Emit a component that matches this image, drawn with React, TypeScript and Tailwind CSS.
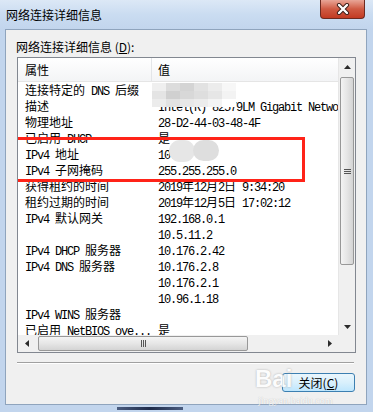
import React from "react";

const rows: [string, string][] = [
  ["连接特定的 DNS 后缀", ""],
  ["描述", "Intel(R) 82579LM Gigabit Network Connection"],
  ["物理地址", "28-D2-44-03-48-4F"],
  ["已启用 DHCP", "是"],
  ["IPv4 地址", "10.    1"],
  ["IPv4 子网掩码", "255.255.255.0"],
  ["获得租约的时间", "2019年12月2日 9:34:20"],
  ["租约过期的时间", "2019年12月5日 17:02:12"],
  ["IPv4 默认网关", "192.168.0.1"],
  ["", "10.5.11.2"],
  ["IPv4 DHCP 服务器", "10.176.2.42"],
  ["IPv4 DNS 服务器", "10.176.2.8"],
  ["", "10.176.2.1"],
  ["", "10.96.1.18"],
  ["IPv4 WINS 服务器", ""],
  ["已启用 NetBIOS ove...", "是"],
];

// SimSun style: ascii is half width (6px), cjk 12px
function T({ s }: { s: string }) {
  const parts = s.split(/([\x00-\x7f]+)/).filter(Boolean);
  return (
    <>
      {parts.map((p, i) =>
        /^[\x00-\x7f]+$/.test(p) ? (
          <span key={i} className="font-['Liberation_Mono'] text-[12px] tracking-[-1.2px] whitespace-pre">
            {p}
          </span>
        ) : (
          <span key={i}>{p}</span>
        )
      )}
    </>
  );
}

function CloseX() {
  return (
    <svg width="14" height="12" viewBox="0 0 14 12">
      <path d="M3 2 L11 10 M11 2 L3 10" stroke="#3a1c18" strokeWidth="4.2" strokeLinecap="round" />
      <path d="M3 2 L11 10 M11 2 L3 10" stroke="#ffffff" strokeWidth="2.4" strokeLinecap="round" />
    </svg>
  );
}

export default function App() {
  return (
    <div className="relative w-[373px] h-[412px] overflow-hidden bg-[#c2d5ed] flex flex-col font-['Noto_Sans_CJK_SC',sans-serif] text-[12px] text-black">
      {/* title bar */}
      <div className="h-[29px] flex justify-between bg-gradient-to-b from-[#dce8f6] via-[#cadcf1] to-[#c2d5ed]">
        <div className="pl-[6px] pt-[6px] leading-[18px] text-[12px]">网络连接详细信息</div>
        <div className="mr-[8px] w-[45px] h-[19px] rounded-b-[4px] border border-t-0 border-[#6d2a20] bg-gradient-to-b from-[#e8a597] via-[#cf5a43] to-[#c23a22] flex items-center justify-center">
          <CloseX />
        </div>
      </div>

      {/* dialog panel */}
      <div className="ml-[5px] mr-[6px] mb-[7px] flex-1 border border-[#8fa4bd] bg-[#f0f0f0] flex flex-col">
        <div className="pl-[10px] pt-[10px] leading-[14px]">
          网络连接详细信息 (<span className="underline">D</span>):
        </div>

        {/* list box */}
        <div className="ml-[11px] mt-[3px] w-[339px] h-[296px] border border-[#828790] bg-white grid grid-cols-[1fr_17px] grid-rows-[1fr_17px]">
          <div className="relative overflow-hidden">
            <div className="h-[24px] flex border-b border-[#e5e5e5] bg-gradient-to-b from-white to-[#f3f4f6]">
              <div className="w-[134px] pl-[7px] flex items-center border-r border-[#e3e5e8]">属性</div>
              <div className="pl-[6px] flex items-center">值</div>
            </div>
            <div>
              {rows.map(([k, v], i) => (
                <div key={i} className="h-[16px] flex leading-[16px] whitespace-nowrap">
                  <div className="w-[134px] pl-[7px] shrink-0">
                    <T s={k} />
                  </div>
                  <div className="pl-[6px]">
                    <T s={v} />
                  </div>
                </div>
              ))}
            </div>
            {/* mosaic over the dns suffix */}
            <div className="absolute left-[134px] top-[25px] grid grid-cols-[repeat(6,14px)] grid-rows-[repeat(3,8px)]">
              {[
                "#efefef", "#dcdcdc", "#d4d4d4", "#e2e2e2", "#ececec", "#f7f7f7",
                "#e4e4e4", "#d0d0d0", "#d8d8d8", "#dedede", "#e6e6e6", "#f3f3f3",
                "#ececec", "#e2e2e2", "#e8e8e8", "#ececec", "#f4f4f4", "#ffffff",
              ].map((c, i) => (
                <div key={i} style={{ backgroundColor: c }} />
              ))}
            </div>
            {/* blobs over the ip */}
            <div className="absolute left-[151px] top-[82px] w-[26px] h-[22px] rounded-full bg-[#e6e6e6]" />
            <div className="absolute left-[175px] top-[82px] w-[26px] h-[21px] rounded-full bg-[#dedede]" />

            {/* red highlight */}
            <div className="absolute left-[-3px] top-[79px] w-[290px] h-[45px] border-[3px] border-[#ff2318]" />
          </div>

          {/* vertical scrollbar */}
          <div className="bg-[#f0f0f0] border-l border-[#e6e6e6] flex flex-col">
            <div className="h-[17px] flex items-center justify-center">
              <svg width="7" height="4" viewBox="0 0 7 4"><path d="M0 4 L3.5 0 L7 4 Z" fill="#2b2b2b" /></svg>
            </div>
            <div className="mx-[1px] mt-[2px] h-[188px] rounded-[2px] border border-[#989898] bg-gradient-to-r from-[#f4f4f4] via-[#e6e6e6] to-[#d4d4d4] flex items-center justify-center">
              <div className="flex flex-col gap-[1px]">
                <div className="w-[7px] h-[1px] bg-[#555]" />
                <div className="w-[7px] h-[1px] bg-[#555]" />
                <div className="w-[7px] h-[1px] bg-[#555]" />
              </div>
            </div>
            <div className="flex-1" />
            <div className="h-[17px] flex items-center justify-center">
              <svg width="7" height="4" viewBox="0 0 7 4"><path d="M0 0 L3.5 4 L7 0 Z" fill="#2b2b2b" /></svg>
            </div>
          </div>

          {/* horizontal scrollbar */}
          <div className="bg-[#f0f0f0] flex items-center">
            <div className="w-[17px] flex justify-center">
              <svg width="4" height="7" viewBox="0 0 4 7"><path d="M4 0 L0 3.5 L4 7 Z" fill="#2b2b2b" /></svg>
            </div>
            <div className="ml-[3px] w-[210px] h-[15px] rounded-[2px] border border-[#989898] bg-gradient-to-b from-[#f4f4f4] via-[#e6e6e6] to-[#d4d4d4] flex items-center justify-center">
              <div className="flex gap-[1px]">
                <div className="w-[1px] h-[7px] bg-[#555]" />
                <div className="w-[1px] h-[7px] bg-[#555]" />
                <div className="w-[1px] h-[7px] bg-[#555]" />
              </div>
            </div>
            <div className="flex-1" />
            <div className="w-[17px] flex justify-center">
              <svg width="4" height="7" viewBox="0 0 4 7"><path d="M0 0 L4 3.5 L0 7 Z" fill="#2b2b2b" /></svg>
            </div>
          </div>
          <div className="bg-[#f0f0f0]" />
        </div>

        {/* separator */}
        <div className="ml-[11px] mt-[9px] w-[337px] h-[2px] border-t border-[#a0a0a0] border-b border-b-white" />

        {/* button */}
        <div className="self-end mr-[11px] mt-[9px] w-[73px] h-[19px] rounded-[3px] border border-[#3c7fb1] bg-gradient-to-b from-[#eaf6fd] via-[#d9f0fc] to-[#bee6fd] flex items-center justify-center leading-none">
          关闭(<span className="underline">C</span>)
        </div>
      </div>

      {/* watermark */}
      <div className="absolute left-[255px] top-[367px] text-[24px] font-bold font-['Liberation_Sans'] text-white opacity-80 [text-shadow:0_0_2px_#9a9a9a] leading-none">
        Bai
      </div>
      <div className="absolute left-[258px] top-[396px] text-[10px] font-['Liberation_Serif'] text-white opacity-80 [text-shadow:0_0_1px_#a0a0a0] leading-none">
        jingyan.baidu.com
      </div>

      {/* task bar strip */}
      <div className="absolute left-[117px] bottom-[2px] w-[66px] h-[3px] bg-gradient-to-r from-[#4b5d80] via-[#1e2b4a] to-[#4b5d80]" />
    </div>
  );
}
